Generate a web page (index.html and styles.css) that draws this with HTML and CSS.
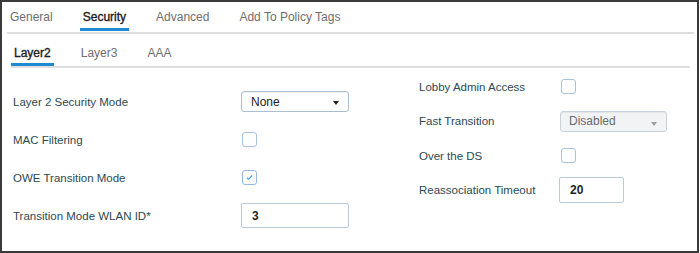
FILE: index.html
```html
<!DOCTYPE html>
<html lang="en">
<head>
    <meta charset="UTF-8">
    <title>WLAN Security</title>
    <link rel="stylesheet" href="styles.css">
</head>
<body>
    <div class="frame">
        <div class="tabs tabs-main">
            <div class="tab">General</div>
            <div class="tab active">Security</div>
            <div class="tab">Advanced</div>
            <div class="tab">Add To Policy Tags</div>
        </div>
        <div class="tabs tabs-sub">
            <div class="tab active">Layer2</div>
            <div class="tab">Layer3</div>
            <div class="tab">AAA</div>
        </div>

        <div class="form">
            <div class="col col-left">
                <div class="row">
                    <label class="label">Layer 2 Security Mode</label>
                    <div class="select">
                        <span>None</span>
                        <span class="arrow"></span>
                    </div>
                </div>
                <div class="row">
                    <label class="label">MAC Filtering</label>
                    <span class="checkbox"></span>
                </div>
                <div class="row">
                    <label class="label">OWE Transition Mode</label>
                    <span class="checkbox checked">
                        <svg viewBox="0 0 15 15" width="13" height="13">
                            <path d="M4.3 7.6 L6.4 9.6 L10.6 5.2" fill="none" stroke="#3d9ce0" stroke-width="1.3"/>
                        </svg>
                    </span>
                </div>
                <div class="row">
                    <label class="label">Transition Mode WLAN ID*</label>
                    <div class="input input-wide">3</div>
                </div>
            </div>

            <div class="col col-right">
                <div class="row">
                    <label class="label">Lobby Admin Access</label>
                    <span class="checkbox"></span>
                </div>
                <div class="row">
                    <label class="label">Fast Transition</label>
                    <div class="select disabled">
                        <span>Disabled</span>
                        <span class="arrow"></span>
                    </div>
                </div>
                <div class="row">
                    <label class="label">Over the DS</label>
                    <span class="checkbox"></span>
                </div>
                <div class="row">
                    <label class="label">Reassociation Timeout</label>
                    <div class="input input-short">20</div>
                </div>
            </div>
        </div>
    </div>
</body>
</html>
```

FILE: styles.css
```css
* {
    margin: 0;
    padding: 0;
    box-sizing: border-box;
}

body {
    margin: 0;
    background: #fff;
    font-family: 'Liberation Sans', Arial, sans-serif;
}

.frame {
    width: 699px;
    height: 253px;
    border: 2px solid #3a3a3a;
    background: #fff;
}

.tabs {
    display: flex;
    gap: 24px;
    border-bottom: 2px solid #dedede;
}

.tabs-main {
    margin: 0 3px 0 5px;
    padding-bottom: 1px;
}

.tabs-sub {
    margin: 12px 7px 0 9px;
}

.tab {
    font-size: 12px;
    line-height: 14px;
    color: #6e6e6e;
    padding: 0 3px 3px;
    border-bottom: 3px solid transparent;
}

.tabs-main .tab {
    padding: 8px 3px 4px;
}

.tab.active {
    color: #1c1c1c;
    border-bottom-color: #1f8ad2;
    -webkit-text-stroke: 0.35px #1c1c1c;
}

.form {
    display: flex;
    padding-left: 11px;
}

.col-left {
    width: 406px;
    padding-top: 14.5px;
}

.col-left .row {
    height: 38px;
}

.col-left .label {
    width: 228px;
}

.col-right {
    padding-top: 1.5px;
}

.col-right .row {
    height: 34.5px;
}

.col-right .label {
    width: 141px;
}

.row {
    display: flex;
    align-items: center;
}

.label {
    font-size: 11.5px;
    color: #2c4950;
}

.select {
    width: 108px;
    height: 21px;
    border: 1px solid #a9bfd3;
    border-radius: 3px;
    box-shadow: inset 0 1px 1px rgba(0, 0, 0, 0.06);
    display: flex;
    align-items: center;
    justify-content: space-between;
    padding: 0 9px 0 9px;
    font-size: 12px;
    color: #222;
}

.select .arrow {
    width: 0;
    height: 0;
    border-left: 3px solid transparent;
    border-right: 3px solid transparent;
    border-top: 4px solid #222;
    margin-top: 2px;
}

.select.disabled {
    width: 107px;
    background: #f1f3f5;
    border-color: #c8d3dd;
    color: #6a6a6a;
    padding: 0 9px 0 8px;
}

.select.disabled .arrow {
    border-top-color: #9a9fa4;
    margin-top: 5px;
}

.checkbox {
    width: 15px;
    height: 15px;
    margin-left: 1px;
    border: 1.5px solid #a8c2e0;
    border-radius: 3px;
    background: #fff;
    display: flex;
    align-items: center;
    justify-content: center;
}

.checkbox.checked {
    border-color: #93b9e3;
}

.input {
    height: 25px;
    border: 1px solid #b6cad9;
    border-radius: 2px;
    display: flex;
    align-items: center;
    padding-left: 10px;
    font-size: 12px;
    font-weight: bold;
    color: #1e1e1e;
}

.input-wide {
    width: 108px;
}

.input-short {
    width: 65px;
    height: 26px;
    margin-left: -1px;
}
```
